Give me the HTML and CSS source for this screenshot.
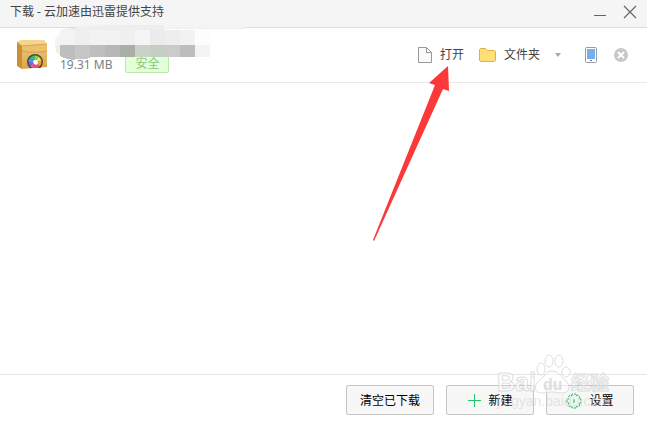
FILE: index.html
```html
<!DOCTYPE html>
<html lang="zh-CN">
  <head>
    <meta charset="UTF-8" />
    <meta name="viewport" content="width=device-width, initial-scale=1.0" />
    <title>下载</title>
    <link rel="stylesheet" href="styles.css">
  </head>
  <body>
    <header class="titlebar">
      <h1 class="title">下载 - 云加速由迅雷提供支持</h1>
      <button class="win-btn" aria-label="最小化">
        <svg width="14" height="14" viewBox="0 0 14 14"><path d="M1 10.5h12" stroke="#666" /></svg>
      </button>
      <button class="win-btn" aria-label="关闭">
        <svg width="14" height="14" viewBox="0 0 14 14"><path d="M1 1l12 12M13 1L1 13" stroke="#666" stroke-width="1.2" /></svg>
      </button>
    </header>

    <main class="list">
      <article class="item">
        <svg class="package" width="32" height="32" viewBox="0 0 32 32">
          <defs>
            <linearGradient id="box" x1="0" y1="0" x2="0" y2="1">
              <stop offset="0" stop-color="#efc878" />
              <stop offset="1" stop-color="#dba547" />
            </linearGradient>
            <clipPath id="lens"><circle cx="19" cy="23" r="6.5" /></clipPath>
            <clipPath id="front"><path d="M0 0h32v29H0z" /></clipPath>
          </defs>
          <path d="M1 3l5 4v23l-5-3z" fill="#cc9034" />
          <path d="M1 3l4-2h23l3 4-25 2z" fill="#f6d48c" />
          <path d="M6 7l25-2v23l-25 2z" fill="url(#box)" />
          <path d="M6 7l25-2v7l-4 1H10l-4-1z" fill="#edc06b" />
          <path d="M6 12l4 1h17l4-1M1 3l5 4 25-2" fill="none" stroke="#c99a4c" stroke-width=".8" />
          <g clip-path="url(#front)">
            <circle cx="19" cy="23" r="8" fill="#4a4a48" />
            <g clip-path="url(#lens)">
              <path d="M19 23L11 17l7-4z" fill="#32bd77" />
              <path d="M19 23l-1-10h8z" fill="#82d84e" />
              <path d="M19 23l7-10 3 8z" fill="#f5df4b" />
              <path d="M19 23l10-2-2 9z" fill="#f39a3c" />
              <path d="M19 23l8 7h-9z" fill="#ef5350" />
              <path d="M19 23l-1 8-7-2z" fill="#e056b4" />
              <path d="M19 23l-8 6-1-6z" fill="#7469df" />
              <path d="M19 23h-9l1-6z" fill="#3aa7dc" />
            </g>
            <path d="M18 21l3 0 1 2-1 3-3-1-1-2z" fill="#fff" />
          </g>
        </svg>
        <div class="info">
          <svg class="mosaic" width="195" height="36" viewBox="0 0 195 36" shape-rendering="crispEdges">
            <path d="M2 4L20 2 45 0H104l81 1v3H104v3H2z" fill="#eeeeee" />
            <path d="M104 0h81v3h-81z" fill="#f4f4f4" />
            <path d="M0 7L-5 14v6h5z" fill="#f5f5f5" />
            <path d="M-5 20h5v11l-4-5z" fill="#f8eedf" />
            <g>
              <path d="M0 5h15v15H0z" fill="#f3f3f3" />
              <path d="M15 5h15v15H15z" fill="#efefef" />
              <path d="M30 5h30v15H30z" fill="#f2f2f2" />
              <path d="M60 5h15v15H60z" fill="#f0f0f0" />
              <path d="M75 5h15v15H75z" fill="#f5f5f5" />
              <path d="M90 5h15v15H90z" fill="#ebebeb" />
              <path d="M105 5h15v15h-15z" fill="#eeeeee" />
              <path d="M120 5h15v15h-15z" fill="#f2f2f2" />
              <path d="M135 5h15v15h-15z" fill="#fdfdfd" />
            </g>
            <g>
              <path d="M0 20h15v15l-8-1-7-3z" fill="#bebebe" />
              <path d="M15 20h15v13l-5 1H15z" fill="#c6c6c6" />
              <path d="M30 20h15v12H30z" fill="#bebebe" />
              <path d="M45 20h15v12H45z" fill="#b7b7b7" />
              <path d="M60 20h15v12H60z" fill="#a9aea7" />
              <path d="M75 20h15v12H75z" fill="#cad1c5" />
              <path d="M90 20h15v12H90z" fill="#c4cec2" />
              <path d="M105 20h15v12h-15z" fill="#cbcbcb" />
              <path d="M120 20h15v12h-15z" fill="#bdbdbd" />
              <path d="M135 20h15v12h-15z" fill="#f4f4f4" />
            </g>
          </svg>
          <div class="meta">
            <span class="size">19.31 MB</span>
            <span class="safe">安全</span>
          </div>
        </div>
        <nav class="actions">
          <button class="action">
            <svg width="14" height="16" viewBox="0 0 14 16"><path d="M.5.5h8l5 5v10H.5z" fill="#fafafa" stroke="#999" /><path d="M8.5.5v5h5" fill="none" stroke="#999" /></svg>
            打开
          </button>
          <button class="action">
            <svg width="17" height="14" viewBox="0 0 17 14"><path d="M.5 1.5l1-1h5l2 2h7l1 1v9l-1 1h-14l-1-1z" fill="#ffdf76" stroke="#dfb040" /></svg>
            文件夹
          </button>
          <button class="action more" aria-label="更多">
            <svg width="6" height="4" viewBox="0 0 6 4"><path d="M0 0h6L3 4z" fill="#aaa" /></svg>
          </button>
          <button class="action phone" aria-label="发送到手机">
            <svg width="12" height="16" viewBox="0 0 12 16"><rect x=".5" y=".5" width="11" height="15" rx="1" fill="#fff" stroke="#929bb0" /><path d="M2 2h8v10H2z" fill="#78aeea" /><path d="M5 13.5h2" stroke="#777" /></svg>
          </button>
          <button class="action" aria-label="删除">
            <svg width="14" height="14" viewBox="0 0 14 14"><circle cx="7" cy="7" r="7" fill="#c8c8c8" /><path d="M4 4l6 6M10 4l-6 6" stroke="#fff" stroke-width="2" /></svg>
          </button>
        </nav>
      </article>
      <svg class="arrow" width="78" height="178" viewBox="0 0 78 178"><path d="M75 2l1 25-6-2L1 177l-1-1L62 21l-6-2z" fill="#fc3838" /></svg>
    </main>

    <footer class="toolbar">
      <button class="btn">清空已下载</button>
      <button class="btn">
        <svg width="14" height="14" viewBox="0 0 14 14"><path d="M7.5 0v13M1 6.5h13" stroke="#27c46b" /></svg>
        新建
      </button>
      <button class="btn">
        <svg width="16" height="16" viewBox="0 0 16 16" fill="none" stroke="#29c46d"><path d="M6 3V1h4v2l2-1 2 2-1 2h2v4h-2l1 2-2 2-2-1v2H6v-2l-2 1-2-2 1-2H1V6h2L2 4l2-2z" stroke-dasharray="3 1" /><path d="M8 6v4M7 8h2" /></svg>
        设置
      </button>
      <svg class="watermark" width="118" height="58" viewBox="0 0 118 58" aria-hidden="true">
        <text class="site" x="0" y="52" font-size="14">jingyan.baidu.com</text>
        <g class="mark">
          <ellipse cx="44" cy="15" rx="4" ry="6" />
          <ellipse cx="52" cy="7" rx="4" ry="6" />
          <ellipse cx="62" cy="7" rx="4" ry="6" />
          <ellipse cx="69" cy="18" rx="4" ry="5" />
          <path d="M55 17c-6 0-8 7-12 9-7 5-6 13 2 13 4 0 7-1 10-1s6 1 10 1c8 0 9-8 3-13-4-3-7-9-13-9z" />
          <text x="0" y="37" font-size="25">Bai</text>
          <text x="74" y="36" font-size="19">经验</text>
        </g>
        <text class="du" x="46" y="36" font-size="16">du</text>
      </svg>
    </footer>
  </body>
</html>
```
FILE: styles.css
```css
* {
  box-sizing: border-box;
}

body {
  margin: 0;
  min-height: 100vh;
  display: flex;
  flex-direction: column;
  background: #fff;
  font-family: 'Noto Sans', 'Noto Sans CJK SC', sans-serif;
  font-size: 12px;
  line-height: 16px;
  color: #444;
}

button {
  font: inherit;
  color: inherit;
  padding: 0;
  border: 0;
  background: none;
}

svg {
  display: block;
  flex: none;
}

.titlebar {
  display: flex;
  align-items: center;
  gap: 16px;
  height: 28px;
  padding: 0 10px 3px;
  background: #f5f5f5;
  border-bottom: 1px solid #dcdcdc;
}

.title {
  flex: 1;
  margin: 0;
  font-size: 12px;
  font-weight: normal;
}

.list {
  flex: 1;
  position: relative;
}

.item {
  display: flex;
  align-items: center;
  height: 55px;
  padding: 0 19px 0 16px;
  border-bottom: 1px solid #e9e9e9;
}

.info {
  flex: 1;
  position: relative;
  align-self: flex-end;
  margin-left: 12px;
  padding-bottom: 9px;
}

/* covers the file name */
.mosaic {
  position: absolute;
  left: 0;
  bottom: 21px;
  overflow: visible;
}

.meta {
  display: flex;
  align-items: flex-end;
  gap: 13px;
  color: #808080;
}

.safe {
  width: 44px;
  padding-top: 1px;
  border: 1px solid #bce8ab;
  border-radius: 2px;
  background: #e2ffd8;
  color: #8dc47c;
  text-align: center;
}

.actions {
  display: flex;
  align-items: center;
  gap: 15px;
}

.action {
  display: flex;
  align-items: center;
  gap: 8px;
}

.phone {
  margin: 0 2px 0 9px;
}

.arrow {
  position: absolute;
  right: 196px;
  top: 36px;
}

.toolbar {
  position: relative;
  display: flex;
  justify-content: flex-end;
  gap: 12px;
  height: 51px;
  padding: 10px 13px;
  border-top: 1px solid #e5e5e5;
}

.btn {
  display: flex;
  align-items: center;
  justify-content: center;
  gap: 7px;
  width: 88px;
  height: 30px;
  padding-top: 2px;
  border: 1px solid #c6c6c6;
  border-radius: 2px;
  background: #f7f7f7;
  color: #000;
}

.watermark {
  position: absolute;
  right: 32px;
  bottom: 13px;
  overflow: visible;
  pointer-events: none;
}

.mark {
  fill: rgba(255, 255, 255, 0.6);
  stroke: rgba(200, 200, 200, 0.6);
  font-family: 'Liberation Sans', 'Noto Sans CJK SC', sans-serif;
  font-weight: bold;
}

.site {
  fill: rgba(205, 205, 205, 0.5);
  font-family: 'Liberation Sans', sans-serif;
}

.du {
  fill: #ddd;
  font-family: 'Liberation Sans', sans-serif;
  font-weight: bold;
}
```
